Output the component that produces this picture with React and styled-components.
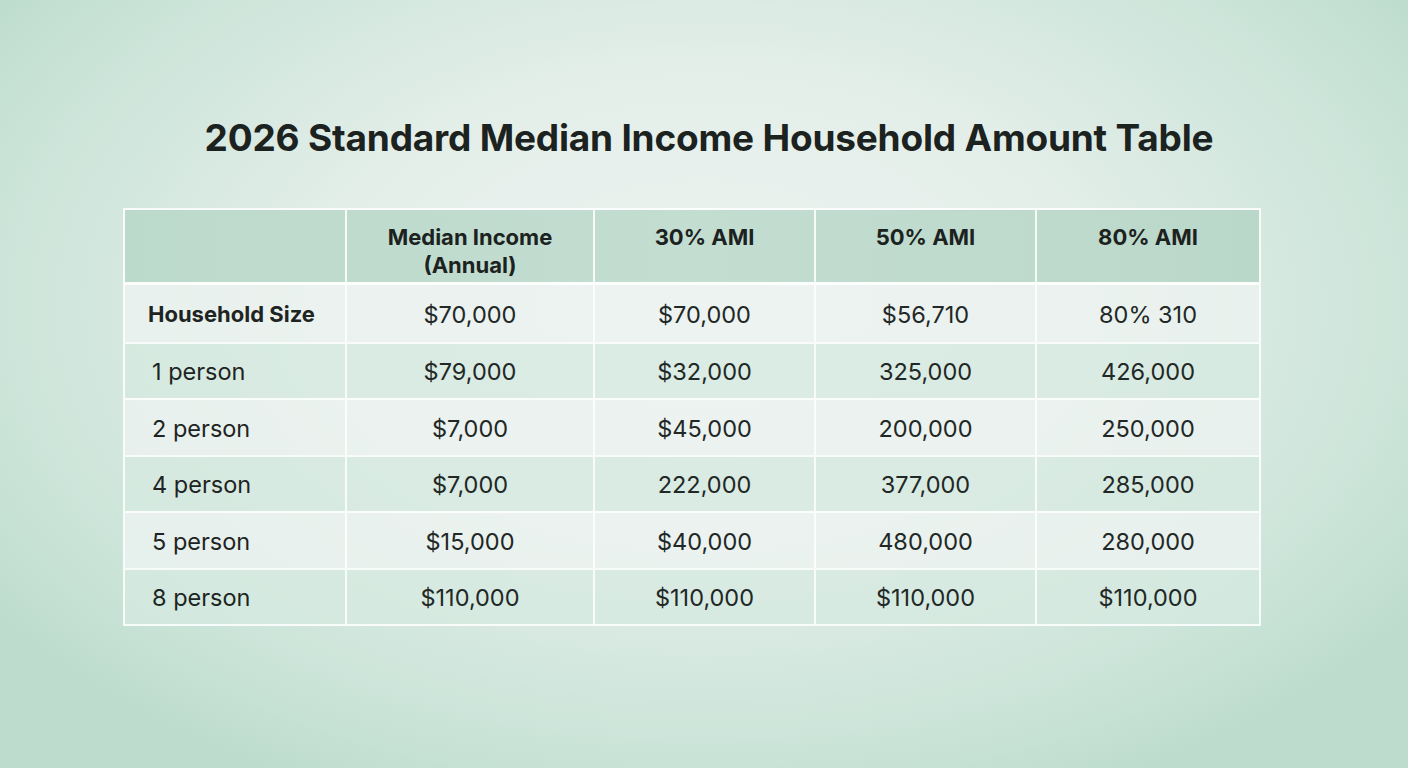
import React from 'react'
import styled, {createGlobalStyle} from 'styled-components'

const GlobalStyle = createGlobalStyle`
    html, body {
        margin: 0;
        padding: 0;
        height: 100%;
    }
    body {
        font-family: Inter, "Noto Sans", "Liberation Sans", sans-serif;
        color: #1d2321;
    }
`

const columns = ['', 'Median Income\n(Annual)', '30% AMI', '50% AMI', '80% AMI']

const rows = [
    {label: 'Household Size', bold: true, values: ['$70,000', '$70,000', '$56,710', '80% 310']},
    {label: '1 person', values: ['$79,000', '$32,000', '325,000', '426,000']},
    {label: '2 person', values: ['$7,000', '$45,000', '200,000', '250,000']},
    {label: '4 person', values: ['$7,000', '222,000', '377,000', '285,000']},
    {label: '5 person', values: ['$15,000', '$40,000', '480,000', '280,000']},
    {label: '8 person', values: ['$110,000', '$110,000', '$110,000', '$110,000']},
]

const App = () => {
    return (
        <Page>
            <GlobalStyle />
            <Title>2026 Standard Median Income Household Amount Table</Title>
            <Table>
                <HeadRow>
                    {columns.map((c, i) => (
                        <HeadCell key={i}>{c}</HeadCell>
                    ))}
                </HeadRow>
                {rows.map((r, i) => (
                    <Row key={i} $tint={i % 2 === 1}>
                        <LabelCell $bold={r.bold}>{r.label}</LabelCell>
                        {r.values.map((v, j) => (
                            <Cell key={j}>{v}</Cell>
                        ))}
                    </Row>
                ))}
            </Table>
        </Page>
    )
}

export default App

const Page = styled.div`
    width: 1408px;
    height: 768px;
    box-sizing: border-box;
    padding-top: 114px;
    overflow: hidden;
    background: radial-gradient(ellipse 62% 70% at 50% 40%, #eef4f1 0%, #e3eee9 45%, #c9e3d7 85%, #bddcce 100%);
`

const Title = styled.h1`
    margin: 0 0 46px 0;
    padding-left: 10px;
    text-align: center;
    font-size: 37px;
    line-height: 48px;
    font-weight: 700;
    letter-spacing: -0.2px;
    color: #1c2220;
`

const grid = `
    display: grid;
    grid-template-columns: 220px 248px 221px 221px 224px;
`

const Table = styled.div`
    width: 1138px;
    margin-left: 123px;
    border: 2px solid rgba(255, 255, 255, 0.85);
    box-sizing: border-box;
`

const HeadRow = styled.div`
    ${grid}
    height: 72px;
    background: linear-gradient(90deg, #bcdacc 0%, #c3ddd1 50%, #bad8ca 100%);
    border-bottom: 3px solid rgba(255, 255, 255, 0.95);
`

const HeadCell = styled.div`
    padding-top: 13px;
    text-align: center;
    white-space: pre-line;
    font-size: 22px;
    line-height: 28px;
    font-weight: 700;
    color: #1c2220;
    border-left: 2px solid rgba(255, 255, 255, 0.85);
    &:first-child {
        border-left: none;
    }
`

const Row = styled.div`
    ${grid}
    height: 56.5px;
    background: ${p => p.$tint ? 'rgba(214, 233, 224, 0.75)' : 'rgba(236, 243, 240, 0.8)'};
    border-top: 2px solid rgba(255, 255, 255, 0.8);
    box-sizing: border-box;
    &:nth-child(2) {
        border-top: none;
    }
`

const Cell = styled.div`
    display: flex;
    align-items: center;
    justify-content: center;
    padding-top: 2px;
    font-size: 23.5px;
    font-weight: 400;
    color: #222826;
    border-left: 2px solid rgba(255, 255, 255, 0.8);
`

const LabelCell = styled.div`
    display: flex;
    align-items: center;
    padding-top: 2px;
    padding-left: ${p => p.$bold ? '23px' : '27px'};
    font-size: ${p => p.$bold ? '22px' : '23.5px'};
    font-weight: ${p => p.$bold ? 700 : 400};
    color: #1e2422;
`
